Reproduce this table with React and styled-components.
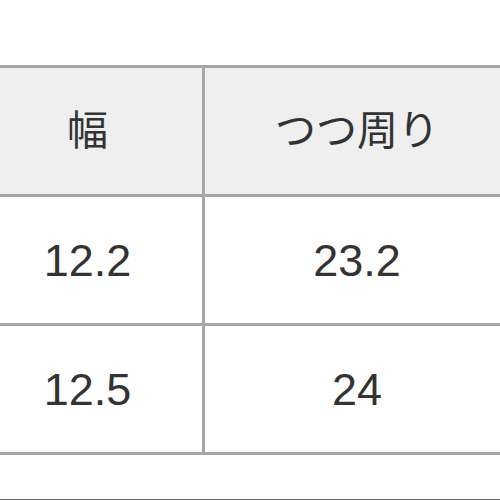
import React from 'react';
import styled, { createGlobalStyle } from 'styled-components';

const GlobalStyle = createGlobalStyle`
  html, body {
    margin: 0;
    padding: 0;
    background: #ffffff;
    overflow: hidden;
  }
`;

const Page = styled.div`
  width: 500px;
  height: 500px;
  padding-top: 65px;
  box-sizing: border-box;
  overflow: hidden;
`;

const SizeTable = styled.div`
  display: grid;
  grid-template-columns: 229px 304px;
  grid-auto-rows: 126px;
  gap: 3px;
  padding: 3px 0;
  margin-left: -27px;
  width: 536px;
  background: #a6a6a6;
  font-family: "Liberation Sans", "Noto Sans CJK JP", sans-serif;
  color: #333333;
`;

const Cell = styled.div`
  display: flex;
  align-items: center;
  justify-content: center;
  background: ${({ $head }) => ($head ? '#efefef' : '#ffffff')};
  font-size: ${({ $head }) => ($head ? '41px' : '45px')};
  line-height: 1;
`;

const Rule = styled.div`
  margin-top: 44px;
  border-top: 1px solid #666666;
`;

const head = ['幅', 'つつ周り'];
const rows = [
  ['12.2', '23.2'],
  ['12.5', '24'],
];

export default function App() {
  return (
    <>
      <GlobalStyle />
      <Page>
        <SizeTable>
          {head.map((h) => (
            <Cell key={h} $head>{h}</Cell>
          ))}
          {rows.map((r, i) =>
            r.map((v, j) => <Cell key={`${i}-${j}`}>{v}</Cell>)
          )}
        </SizeTable>
        <Rule />
      </Page>
    </>
  );
}
